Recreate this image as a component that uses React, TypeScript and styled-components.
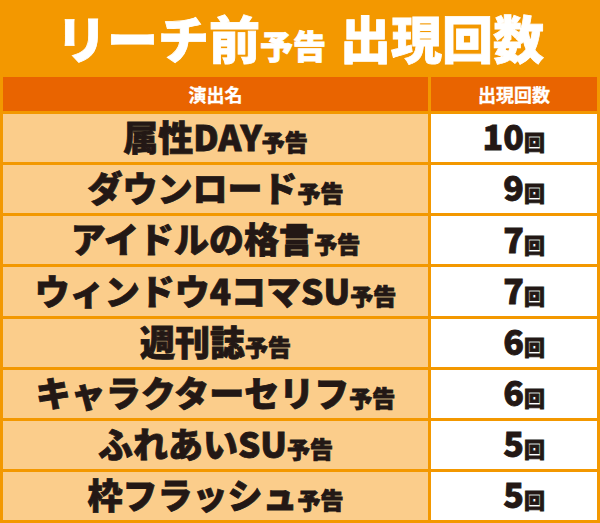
import React from "react";
import styled, { createGlobalStyle } from "styled-components";

const GlobalStyle = createGlobalStyle`
  html, body { margin: 0; padding: 0; background: #f39800; }
  * { box-sizing: border-box; }
`;

const FONT = `"Noto Sans CJK JP", "Noto Sans", sans-serif`;

const Page = styled.div`
  width: 600px;
  height: 523px;
  background: #f39800;
  padding: 0 3px 3px;
  display: flex;
  flex-direction: column;
  font-family: ${FONT};
`;

const Title = styled.h1`
  margin: 0;
  height: 77px;
  display: flex;
  align-items: center;
  justify-content: center;
  color: #ffffff;
  font-weight: 900;
  font-size: 51px;
  -webkit-text-stroke: 0.8px #ffffff;
`;

const TitleLabel = styled.span`
  white-space: nowrap;
  line-height: normal;
  margin-top: -4px;
`;

const Label = styled.span`
  white-space: nowrap;
  line-height: 1.25;
`;

const Small = styled.span<{ $size: number }>`
  font-size: ${(p) => p.$size}px;
`;

const Gap = styled.span`
  display: inline-block;
  width: 14px;
`;

const Table = styled.div`
  flex: 1;
  display: grid;
  grid-template-columns: 425px 1fr;
  grid-template-rows: 34px repeat(8, 1fr);
  column-gap: 3px;
  row-gap: 3px;
`;

const HeadCell = styled.div`
  background: #e96400;
  color: #ffffff;
  font-weight: 700;
  font-size: 18px;
  display: flex;
  align-items: center;
  justify-content: center;
  padding-bottom: 1px;
  -webkit-text-stroke: 0.3px #ffffff;
`;

const NameCell = styled.div`
  background: #fbcd8b;
  color: #231815;
  font-weight: 900;
  font-size: 35px;
  display: flex;
  align-items: center;
  justify-content: center;
  padding-bottom: 4px;
  -webkit-text-stroke: 0.8px #231815;
`;

const CountCell = styled.div`
  background: #ffffff;
  color: #231815;
  font-weight: 900;
  font-size: 34px;
  display: flex;
  align-items: center;
  justify-content: flex-end;
  padding-right: 52px;
  padding-bottom: 3px;
  -webkit-text-stroke: 0.8px #231815;
`;

const rows: { name: string; count: number }[] = [
  { name: "属性DAY", count: 10 },
  { name: "ダウンロード", count: 9 },
  { name: "アイドルの格言", count: 7 },
  { name: "ウィンドウ4コマSU", count: 7 },
  { name: "週刊誌", count: 6 },
  { name: "キャラクターセリフ", count: 6 },
  { name: "ふれあいSU", count: 5 },
  { name: "枠フラッシュ", count: 5 },
];

export default function App() {
  return (
    <>
      <GlobalStyle />
      <Page>
        <Title>
          <TitleLabel>
            リーチ前<Small $size={33}>予告</Small>
            <Gap />
            出現回数
          </TitleLabel>
        </Title>
        <Table>
          <HeadCell>演出名</HeadCell>
          <HeadCell>出現回数</HeadCell>
          {rows.map((r) => (
            <React.Fragment key={r.name}>
              <NameCell>
                <Label>
                  {r.name}
                  <Small $size={23}>予告</Small>
                </Label>
              </NameCell>
              <CountCell>
                <Label>
                  {r.count}
                  <Small $size={21}>回</Small>
                </Label>
              </CountCell>
            </React.Fragment>
          ))}
        </Table>
      </Page>
    </>
  );
}
